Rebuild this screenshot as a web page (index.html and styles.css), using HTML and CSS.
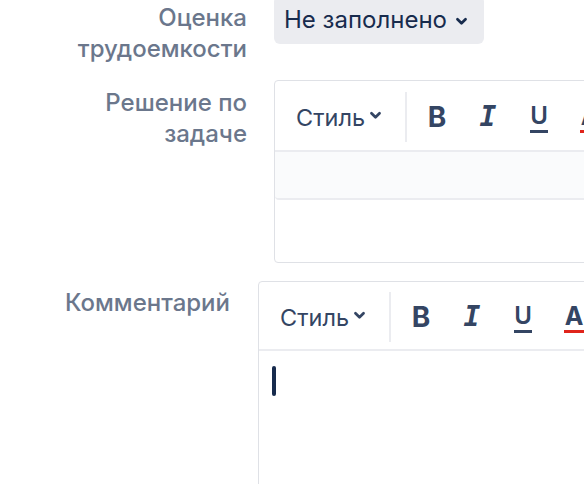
FILE: index.html
```html
<!DOCTYPE html>
<html lang="ru">
<head>
<meta charset="utf-8">
<link rel="stylesheet" href="styles.css">
</head>
<body>
<div class="page">
  <div class="form form-a">
    <div class="row row-estimate">
      <div class="label">Оценка трудоемкости</div>
      <div class="field">
        <div class="select">
          <span class="select-text">Не заполнено</span>
          <svg class="chev chev-select" viewBox="0 0 14 10" width="13" height="9"><path d="M2.5 2.5 L7 7 L11.5 2.5" fill="none" stroke="currentColor" stroke-width="3" stroke-linecap="round" stroke-linejoin="round"/></svg>
        </div>
      </div>
    </div>
    <div class="row row-solution">
      <div class="label">Решение по задаче</div>
      <div class="field">
        <div class="editor">
          <div class="toolbar">
            <div class="style-btn"><span>Стиль</span><svg class="chev" viewBox="0 0 14 10" width="13" height="9"><path d="M2.5 2.5 L7 7 L11.5 2.5" fill="none" stroke="currentColor" stroke-width="3" stroke-linecap="round" stroke-linejoin="round"/></svg></div>
            <div class="sep"></div>
            <div class="tb-btn"><span class="ic-b">B</span></div>
            <div class="tb-btn"><span class="ic-i">I</span></div>
            <div class="tb-btn"><span class="ic-u">U</span></div>
            <div class="tb-btn"><span class="ic-a">A</span></div>
          </div>
          <div class="pane-grey"></div>
          <div class="pane-white"></div>
        </div>
      </div>
    </div>
  </div>
  <div class="form form-b">
    <div class="row row-comment">
      <div class="label">Комментарий</div>
      <div class="field">
        <div class="editor">
          <div class="toolbar toolbar-b">
            <div class="style-btn"><span>Стиль</span><svg class="chev" viewBox="0 0 14 10" width="13" height="9"><path d="M2.5 2.5 L7 7 L11.5 2.5" fill="none" stroke="currentColor" stroke-width="3" stroke-linecap="round" stroke-linejoin="round"/></svg></div>
            <div class="sep"></div>
            <div class="tb-btn"><span class="ic-b">B</span></div>
            <div class="tb-btn"><span class="ic-i">I</span></div>
            <div class="tb-btn"><span class="ic-u">U</span></div>
            <div class="tb-btn"><span class="ic-a">A</span></div>
          </div>
          <div class="content"><span class="cursor"></span></div>
        </div>
      </div>
    </div>
  </div>
</div>
</body>
</html>
```
FILE: styles.css
```css
html, body {
  margin: 0;
  padding: 0;
  background: #ffffff;
  overflow: hidden;
}
body {
  width: 584px;
  height: 484px;
  font-family: Inter, "Noto Sans", "DejaVu Sans", sans-serif;
  color: #253858;
}
.page {
  margin-top: -4px;
}
.row {
  display: grid;
  align-items: start;
}
.form-a .row {
  grid-template-columns: 187px 400px;
  column-gap: 27px;
  padding-left: 60px;
}
.form-b .row {
  grid-template-columns: 187px 400px;
  column-gap: 28px;
  padding-left: 43px;
}
.label {
  text-align: right;
  font-size: 24px;
  line-height: 31px;
  color: #6b778c;
  font-weight: 500;
}
.row-estimate .label {
  padding-top: 6px;
}
.row-solution {
  margin-top: 16px;
}
.row-solution .label {
  padding-top: 7px;
}
.form-b {
  margin-top: 18px;
}
.row-comment .label {
  padding-top: 6px;
}
.select {
  display: inline-flex;
  align-items: center;
  height: 48px;
  width: 210px;
  box-sizing: border-box;
  padding: 0 10px;
  background: #ebecf0;
  border-radius: 6px;
  font-size: 24px;
  color: #172b4d;
}
.select-text {
  padding-bottom: 1px;
}
.chev-select {
  margin-left: 8px;
  margin-top: 2px;
}
.editor {
  border: 1px solid #dfe1e6;
  border-radius: 4px;
  width: 400px;
  box-sizing: border-box;
}
.toolbar {
  height: 71px;
  display: flex;
  align-items: center;
  padding-left: 21px;
  padding-top: 3px;
  border-bottom: 2px solid #ebecf0;
  box-sizing: border-box;
}
.toolbar-b {
  height: 69px;
}
.style-btn {
  display: flex;
  align-items: center;
  width: 108px;
  font-size: 23.5px;
  color: #344563;
}
.style-btn .chev {
  margin-left: 4px;
  margin-top: -4px;
  color: #344563;
}
.sep {
  width: 2px;
  height: 50px;
  background: #ebecf0;
  margin-left: 1px;
  margin-right: 12px;
}
.tb-btn {
  width: 36px;
  margin-right: 15px;
  display: flex;
  justify-content: center;
  align-items: center;
  height: 32px;
  color: #344563;
}
.ic-b {
  font-family: Inter, sans-serif;
  font-weight: 700;
  font-size: 28px;
  line-height: 1;
}
.ic-i {
  font-family: "DejaVu Sans Mono", monospace;
  font-weight: 700;
  font-style: italic;
  font-size: 28px;
  line-height: 1;
}
.ic-u {
  font-family: Inter, sans-serif;
  font-weight: 600;
  font-size: 24px;
  line-height: 1;
  padding: 0 0 2px;
  border-bottom: 3px solid #344563;
  margin-top: 2px;
}
.ic-a {
  font-family: Inter, sans-serif;
  font-weight: 700;
  font-size: 25px;
  line-height: 1;
  padding: 0 1px 1px;
  border-bottom: 3px solid #e0241b;
  margin-top: 2px;
}
.pane-grey {
  height: 46px;
  background: #fafbfc;
  border-bottom: 2px solid #ebecf0;
  border-radius: 0 0 4px 4px;
}
.pane-white {
  height: 62px;
}
.content {
  height: 200px;
  padding: 15px 13px;
  box-sizing: border-box;
}
.cursor {
  display: block;
  width: 4px;
  height: 30px;
  background: #172b4d;
  border-radius: 2px;
}
```
